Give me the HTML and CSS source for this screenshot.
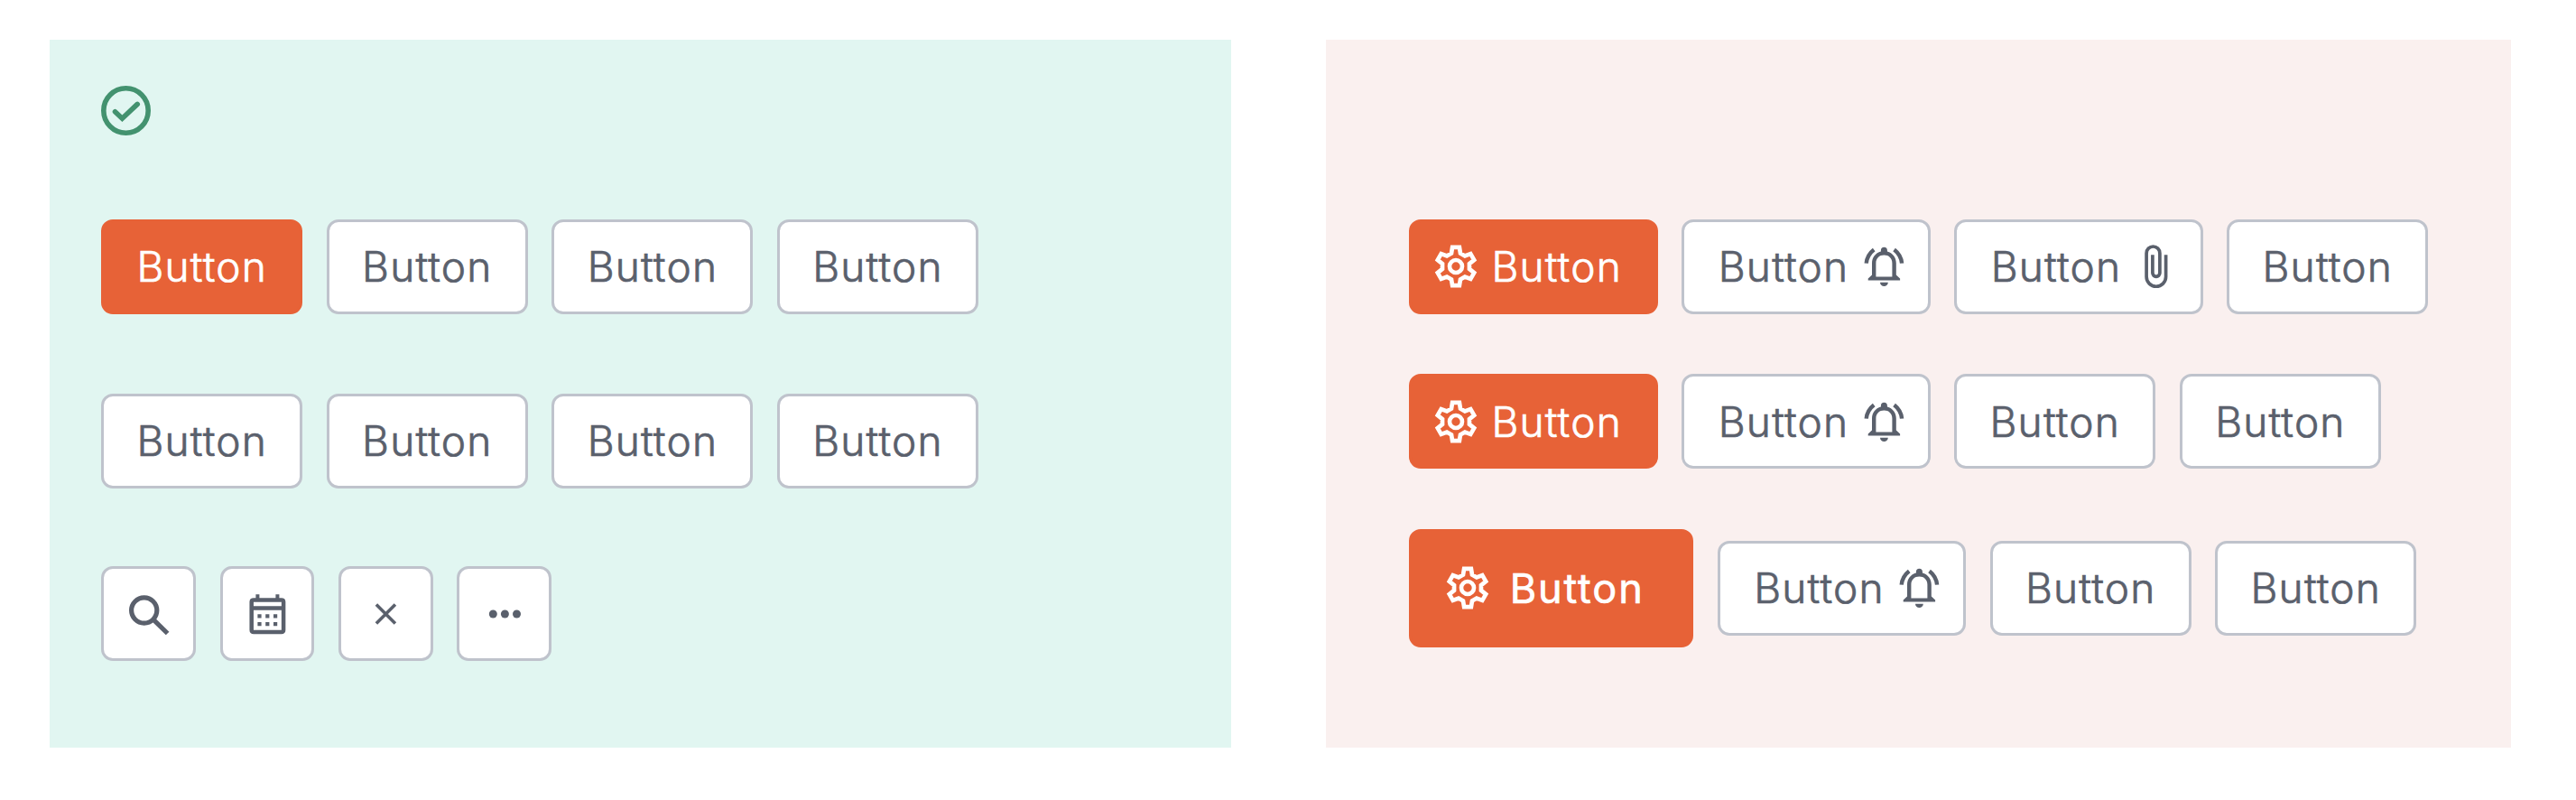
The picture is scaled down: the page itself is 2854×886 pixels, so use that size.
FILE: index.html
```
<!DOCTYPE html>
<html lang="en">
<head>
<meta charset="utf-8">
<title>Button usage</title>
<link rel="stylesheet" href="styles.css">
</head>
<body>
<svg class="defs" aria-hidden="true">
  <symbol id="gear" viewBox="-26 -26 52 52">
    <path fill="none" stroke="currentColor" stroke-width="4.7" d="M-5-14.4L-3.9-21.1H3.9L5-14.4L9.97-11.53L16.3-13.93L20.2-7.17L14.97-2.87V2.87L20.2 7.17L16.3 13.93L9.97 11.53L5 14.4L3.9 21.1H-3.9L-5 14.4L-9.97 11.53L-16.3 13.93L-20.2 7.17L-14.97 2.87V-2.87L-20.2-7.17L-16.3-13.93L-9.97-11.53Z"/>
    <circle r="7" fill="none" stroke="currentColor" stroke-width="4.6"/>
  </symbol>
  <symbol id="bell" viewBox="-26.4 -26 52 52">
    <path fill="currentColor" fill-rule="evenodd" d="M-3.5-16.6V-17.8A3.5 3.5 0 0 1 3.5-17.8V-16.6C9.5-15 13.4-10 13.4-3.5V9.5L17.7 13.6V15.6H-17.7V13.6L-13.4 9.5V-3.5C-13.4-10-9.5-15-3.5-16.6ZM-9 11.5H9V-3.5C9-9 5.2-12.4 0-12.4S-9-9-9-3.5ZM-4.4 17.7H4.4A4.4 4.3 0 0 1-4.4 17.7Z"/>
    <path fill="none" stroke="currentColor" stroke-width="4.4" d="M-19.7-3.3Q-19-12.6-11.2-18.6M19.7-3.3Q19-12.6 11.2-18.6"/>
  </symbol>
  <symbol id="clip" viewBox="-26 -26 52 52">
    <path fill="none" stroke="currentColor" stroke-width="3.7" d="M10.6-12.7V11.5A10.75 10.75 0 0 1-10.9 11.5V-14.6A7.4 7.4 0 0 1 3.9-14.6V7.3A4 4 0 0 1-4.1 7.3V-12.7"/>
  </symbol>
</svg>

<section class="panel panel-do">
  <svg class="check" viewBox="0 0 55 55">
    <circle cx="27.5" cy="27.5" r="24.7" fill="none" stroke="currentColor" stroke-width="5.6"/>
    <path fill="none" stroke="currentColor" stroke-width="5.6" stroke-linecap="round" d="M15.5 28.7L23.4 36.2L40.2 20.4"/>
  </svg>
  <div class="row row-first">
    <button class="btn primary">Button</button>
    <button class="btn">Button</button>
    <button class="btn">Button</button>
    <button class="btn">Button</button>
  </div>
  <div class="row row-second">
    <button class="btn">Button</button>
    <button class="btn">Button</button>
    <button class="btn">Button</button>
    <button class="btn">Button</button>
  </div>
  <div class="row row-icons">
    <button class="btn square" aria-label="Search"><svg class="icon" viewBox="-26 -26 52 52"><g fill="none" stroke="currentColor" stroke-width="5.2"><circle cx="-5.3" cy="-4" r="14.1"/><path d="M4.6 5.8L20.6 21.5"/></g></svg></button>
    <button class="btn square" aria-label="Calendar"><svg class="icon" viewBox="-26.4 -26 52 52"><path fill="none" stroke="currentColor" stroke-width="4.5" d="M-15.3-15.6H15.3Q17.7-15.6 17.7-13.4V17.8Q17.7 20 15.3 20H-15.3Q-17.7 20-17.7 17.8V-13.4Q-17.7-15.6-15.3-15.6ZM-18-6.6H18"/><path fill="currentColor" d="M-13-21.8h4v5h-4zM9-21.8h4v5h-4zM-11 .2h4.2v4.2H-11zM-2.2.2H2v4.2h-4.2zM6.6.2h4.2v4.2H6.6zM-11 9h4.2v4.2H-11zM-2.2 9H2v4.2h-4.2zM6.6 9h4.2v4.2H6.6z"/></svg></button>
    <button class="btn square" aria-label="Close"><svg class="icon" viewBox="-26.4 -26 52 52"><path fill="none" stroke="currentColor" stroke-width="3.6" d="M-10.5-10.5L10.5 10.5M10.5-10.5L-10.5 10.5"/></svg></button>
    <button class="btn square" aria-label="More"><svg class="icon" viewBox="-26.4 -26 52 52"><g fill="currentColor"><circle cx="-13.1" r="4.5"/><circle r="4.5"/><circle cx="13.1" r="4.5"/></g></svg></button>
  </div>
</section>

<section class="panel panel-dont">
  <div class="row">
    <button class="btn primary lead"><svg class="icon"><use href="#gear"/></svg>Button</button>
    <button class="btn trail">Button<svg class="icon"><use href="#bell"/></svg></button>
    <button class="btn trail">Button<svg class="icon"><use href="#clip"/></svg></button>
    <button class="btn">Button</button>
  </div>
  <div class="row">
    <button class="btn primary lead"><svg class="icon"><use href="#gear"/></svg>Button</button>
    <button class="btn trail">Button<svg class="icon"><use href="#bell"/></svg></button>
    <button class="btn">Button</button>
    <button class="btn">Button</button>
  </div>
  <div class="row">
    <button class="btn primary large"><svg class="icon"><use href="#gear"/></svg>Button</button>
    <button class="btn trail">Button<svg class="icon"><use href="#bell"/></svg></button>
    <button class="btn">Button</button>
    <button class="btn">Button</button>
  </div>
</section>
</body>
</html>
```
FILE: styles.css
```
* {
  box-sizing: border-box;
}

body {
  margin: 0;
  padding: 44px 72px 0 55px;
  display: flex;
  justify-content: space-between;
  background: #fff;
  font-family: Inter, "Liberation Sans", sans-serif;
}

.defs {
  display: none;
}

.panel {
  height: 784px;
  display: flex;
  flex-direction: column;
}

.panel-do {
  width: 1309px;
  padding: 51px 0 0 57.3px;
  background: #e1f6f1;
}

.panel-dont {
  width: 1313px;
  padding: 199px 0 0 92.4px;
  gap: 66.8px;
  background: #faf0ef;
}

.check {
  width: 55px;
  height: 55px;
  color: #43926f;
}

.row {
  display: flex;
  align-items: center;
  gap: 26.7px;
}

.row-first {
  margin-top: 93px;
}

.row-second {
  margin-top: 88.3px;
}

.row-icons {
  margin-top: 86.5px;
}

.btn {
  display: flex;
  align-items: center;
  justify-content: center;
  flex: none;
  width: 222.9px;
  height: 104.7px;
  padding: 0;
  border: 3px solid #bfc3cc;
  border-radius: 13px;
  background: #fff;
  color: #5a606c;
  font: 300 46px/1 Inter, "Liberation Sans", sans-serif;
  letter-spacing: 1.2px;
  -webkit-text-stroke: 0.7px currentColor;
}

.primary {
  border-color: #e76237;
  background: #e76237;
  color: #fff;
}

.square {
  width: 104.7px;
}

.lead,
.trail {
  width: 275.3px;
  gap: 13px;
}

.lead {
  justify-content: flex-start;
  padding-left: 23px;
}

.trail {
  justify-content: flex-end;
  padding-right: 23px;
  gap: 12.4px;
}

.large {
  width: 314.7px;
  height: 131px;
  justify-content: flex-start;
  padding-left: 36px;
  gap: 20.3px;
  font-size: 45px;
  font-weight: 400;
  letter-spacing: 1.9px;
  -webkit-text-stroke: 0.7px currentColor;
}

.icon {
  flex: none;
  width: 52px;
  height: 52px;
}
```
